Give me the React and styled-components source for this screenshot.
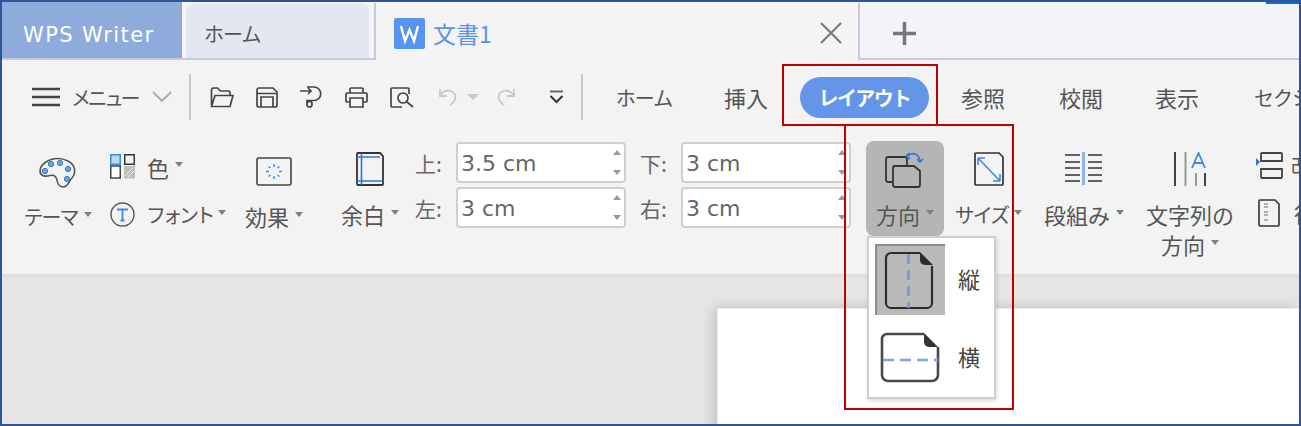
import styled, { createGlobalStyle } from 'styled-components';

const GlobalStyle = createGlobalStyle`
  html, body { margin: 0; padding: 0; background: #fff; }
  body { font-family: "Noto Sans CJK JP", "Noto Sans", sans-serif; color: #555; }
  svg { flex: none; display: block; }
`;

const Window = styled.div`
  position: relative;
  width: 1301px;
  height: 426px;
  box-sizing: border-box;
  border: 2px solid #2f5597;
  display: flex;
  flex-direction: column;
  overflow: hidden;
  background: #f3f4f8;
`;

const TitleBar = styled.div`
  display: flex;
  flex: none;
  height: 56px;
  border-bottom: 2px solid #c6cbda;
  background: #f3f4f8;
`;

const AppTab = styled.div`
  width: 180px;
  height: 56px;
  flex: none;
  background: #8fabdc;
  color: #fff;
  font: 21px/67px "DejaVu Sans", sans-serif;
  letter-spacing: 1.4px;
  padding-left: 21px;
  box-sizing: border-box;
`;

const HomeTab = styled.div`
  width: 183px;
  height: 54px;
  flex: none;
  margin: 2px 5px 0 4px;
  border-radius: 7px 7px 0 0;
  background: #e3e7f0;
  color: #555;
  font-size: 20px;
  letter-spacing: -1px;
  line-height: 60px;
  padding-left: 18px;
  box-sizing: border-box;
`;

const DocTab = styled.div`
  width: 486px;
  height: 57px;
  flex: none;
  margin-top: 1px;
  box-sizing: border-box;
  border-left: 2px solid #c6cbda;
  border-right: 2px solid #c6cbda;
  background: #f4f4f4;
  display: flex;
  align-items: center;
  padding: 3px 16px 0 18px;
  color: #5b92ea;
  font-size: 23px;
  gap: 8px;
`;

const DocName = styled.span`
  flex: 1;
`;

const AddTab = styled.div`
  margin-left: 33px;
  margin-top: 20px;
`;

const SyncMark = styled.div`
  position: absolute;
  top: 0;
  right: 0;
  width: 33px;
  height: 2px;
  background: #0b6fcd;
`;

const Ribbon = styled.div`
  flex: none;
  height: 214px;
  background: #f3f3f3;
`;

const TabRow = styled.div`
  display: flex;
  align-items: center;
  height: 74px;
  padding-left: 30px;
  white-space: nowrap;
`;

const MenuButton = styled.div`
  display: flex;
  align-items: center;
  flex: none;
  font-size: 20px;
  color: #555;
`;

const MenuText = styled.span`
  margin: 0 15px 0 11px;
  letter-spacing: -3.5px;
`;

const Separator = styled.div`
  width: 2px;
  height: 46px;
  flex: none;
  margin: 0 ${(p) => p.$right}px 0 ${(p) => p.$left}px;
  background: #c8c8c8;
`;

const QuickButton = styled.div`
  width: ${(p) => p.$w}px;
  margin-left: ${(p) => p.$ml || 0}px;
  flex: none;
  display: flex;
  justify-content: center;
  align-items: center;
`;

const RibbonTab = styled.div`
  width: ${(p) => p.$w}px;
  flex: none;
  text-align: center;
  font-size: ${(p) => p.$size || 22}px;
  letter-spacing: ${(p) => p.$track || 0}px;
  color: #555;
`;

const ActiveRibbonTab = styled.div`
  width: 129px;
  height: 41px;
  flex: none;
  margin-left: 13px;
  border-radius: 21px;
  background: #6495e8;
  color: #fff;
  font-size: 20px;
  font-weight: 700;
  letter-spacing: -1.6px;
  line-height: 41px;
  text-align: center;
`;

const ClippedTab = styled.div`
  flex: none;
  margin-left: 25px;
  font-size: 20px;
  letter-spacing: -1px;
  color: #555;
`;

const ToolRow = styled.div`
  display: flex;
  height: 140px;
  padding-top: 7px;
  box-sizing: border-box;
  white-space: nowrap;
`;

const Column = styled.div`
  position: relative;
  flex: none;
  width: ${(p) => p.$w}px;
  margin-left: ${(p) => p.$ml}px;
  display: flex;
  flex-direction: column;
  align-items: center;
`;

const IconSlot = styled.div`
  height: ${(p) => p.$h}px;
  flex: none;
  padding-top: ${(p) => p.$pad}px;
  box-sizing: border-box;
`;

const ToolLabel = styled.div`
  display: flex;
  align-items: center;
  height: 30px;
  font-size: ${(p) => p.$size || 22}px;
  letter-spacing: ${(p) => p.$track || 0}px;
  color: #555;
`;

const Caret = styled.span`
  width: 0;
  height: 0;
  flex: none;
  margin: 0 0 4px 6px;
  border-left: 4.5px solid transparent;
  border-right: 4.5px solid transparent;
  border-top: 5px solid #808080;
`;

const StackedTools = styled.div`
  flex: none;
  width: 118px;
  margin-left: 18px;
  padding-top: 13px;
  display: flex;
  flex-direction: column;
  gap: 23px;
`;

const StackedTool = styled.div`
  display: flex;
  align-items: center;
  height: 25px;
  gap: ${(p) => p.$gap}px;
`;

const MarginGrid = styled.div`
  flex: none;
  margin: 1px 0 0 15px;
  display: grid;
  grid-template-columns: 41px 170px 55px 170px;
  grid-auto-rows: 41px;
  row-gap: 4px;
  align-items: center;
`;

const MarginLabel = styled.div`
  font-size: 21px;
  color: #666;
  margin-left: ${(p) => (p.$second ? 14 : 0)}px;
`;

const SpinField = styled.div`
  height: 41px;
  box-sizing: border-box;
  border: 2px solid #cfcfcf;
  border-radius: 4px;
  background: #fff;
  display: flex;
  align-items: center;
  justify-content: space-between;
  padding: 2px 3px 0 3px;
  font: 22px "DejaVu Sans", sans-serif;
  color: #666;
`;

const Spinner = styled.div`
  display: flex;
  flex-direction: column;
  justify-content: space-between;
  height: 25px;
  margin-top: -2px;
`;

const SpinArrow = styled.span`
  width: 0;
  height: 0;
  border-left: 4.5px solid transparent;
  border-right: 4.5px solid transparent;
  ${(p) => (p.$down ? 'border-top: 5px solid #999;' : 'border-bottom: 5px solid #999;')}
`;

const ActiveTool = styled.div`
  width: 78px;
  height: 95px;
  border-radius: 8px;
  background: #b5b5b5;
  display: flex;
  flex-direction: column;
  align-items: center;
`;

const Dropdown = styled.div`
  position: absolute;
  top: 95px;
  left: 1px;
  width: 129px;
  height: 163px;
  box-sizing: border-box;
  border: 2px solid #cfcfcf;
  background: #fff;
  box-shadow: 1px 2px 4px rgba(0, 0, 0, 0.15);
  padding: 6px;
  display: flex;
  flex-direction: column;
  gap: 7px;
  z-index: 2;
`;

const DropdownItem = styled.div`
  display: flex;
  align-items: center;
  height: 71px;
  font-size: 22px;
  line-height: 1;
  color: #444;
`;

const ItemIcon = styled.div`
  width: 70px;
  height: 71px;
  flex: none;
  box-sizing: border-box;
  display: flex;
  align-items: center;
  padding-left: ${(p) => (p.$selected ? 7 : 5)}px;
  ${(p) =>
    p.$selected &&
    `background: #b9b9b9;
     border-top: 2px solid #8d8d8d;
     border-left: 2px solid #8d8d8d;`}
`;

const ItemText = styled.span`
  margin: 0 0 4px 13px;
`;

const RightTools = styled.div`
  flex: none;
  margin-left: 20px;
  padding-top: 9px;
  display: flex;
  flex-direction: column;
  gap: 19px;
`;

const RightTool = styled.div`
  display: flex;
  align-items: center;
  height: 29px;
  gap: ${(p) => p.$gap}px;
  padding-left: ${(p) => p.$pad}px;
  font-size: 21px;
  color: #555;
`;

const DocArea = styled.div`
  flex: 1;
  background: linear-gradient(#dcdcdc, #e6e6e6 6px);
  padding: 34px 0 0 715px;
  overflow: hidden;
`;

const DocPage = styled.div`
  height: 200px;
  background: #fff;
  box-shadow: -4px -1px 12px rgba(0, 0, 0, 0.16);
  border-top: 1px solid #eee;
  border-left: 1px solid #eee;
`;

const Annotation = styled.div`
  position: absolute;
  left: ${(p) => p.$x}px;
  top: ${(p) => p.$y}px;
  width: ${(p) => p.$w}px;
  height: ${(p) => p.$h}px;
  box-sizing: border-box;
  border: 2px solid #c00000;
  z-index: 3;
  pointer-events: none;
`;

const line = { fill: 'none', stroke: '#444', strokeWidth: 1.7 };
const blue = '#3f8ae0';

const WpsLogo = () => (
  <svg width="31" height="31" viewBox="0 0 31 31">
    <rect width="31" height="31" rx="2" fill="#5595ef" />
    <path d="M7 8 L11 23 L15.5 12 L20 23 L24 8" fill="none" stroke="#fff" strokeWidth="2.4" />
  </svg>
);
const CloseIcon = () => (
  <svg width="22" height="22" viewBox="0 0 22 22">
    <path d="M1 1 L21 21 M21 1 L1 21" stroke="#777" strokeWidth="2" />
  </svg>
);
const PlusIcon = () => (
  <svg width="23" height="23" viewBox="0 0 23 23">
    <path d="M0 11.5 H23 M11.5 0 V23" stroke="#777" strokeWidth="3.5" />
  </svg>
);
const HamburgerIcon = () => (
  <svg width="28" height="20" viewBox="0 0 28 20">
    <path d="M0 2 H28 M0 10 H28 M0 18 H28" stroke="#444" strokeWidth="2.4" />
  </svg>
);
const ChevronIcon = () => (
  <svg width="20" height="12" viewBox="0 0 20 12">
    <path d="M1 1 L10 10 L19 1" fill="none" stroke="#aaa" strokeWidth="1.8" />
  </svg>
);
const FolderIcon = () => (
  <svg width="24" height="21" viewBox="0 0 24 21">
    <path {...line} d="M1.5 18 V3 a2 2 0 0 1 2-2 h4 l3 3 h8 a1.5 1.5 0 0 1 1.5 1.5 V8 M1.5 19.5 L5 8.5 H23 L20 19.5 Z" />
  </svg>
);
const SaveIcon = () => (
  <svg width="22" height="21" viewBox="0 0 22 21">
    <path {...line} d="M1 3 a2 2 0 0 1 2-2 h14 l4 4 v13 a2 2 0 0 1 -2 2 H3 a2 2 0 0 1 -2-2 Z M1 6.5 H21 M5 20 V10 H17 V20" />
  </svg>
);
const SaveAsIcon = () => (
  <svg width="23" height="22" viewBox="0 0 23 22">
    <path {...line} d="M0 5 H11 M8 2 L11 5 L8 8 M7 1 H14 a6.5 6.5 0 0 1 0 13.5 H7 V18.5 a2.5 2.5 0 0 0 5 0 a2.5 2.5 0 0 0 -5 -1" />
  </svg>
);
const PrintIcon = () => (
  <svg width="23" height="21" viewBox="0 0 23 21">
    <path {...line} d="M5 6 V2 a1 1 0 0 1 1-1 h11 a1 1 0 0 1 1 1 v4 M5 15 H2 a1 1 0 0 1 -1-1 V7 a1 1 0 0 1 1-1 h19 a1 1 0 0 1 1 1 v7 a1 1 0 0 1 -1 1 h-3 M5 11 H18 V20 H5 Z" />
  </svg>
);
const PreviewIcon = () => (
  <svg width="24" height="21" viewBox="0 0 24 21">
    <path {...line} d="M12 20 H2 a1 1 0 0 1 -1-1 V2 a1 1 0 0 1 1-1 H18 a1 1 0 0 1 1 1 V7" />
    <circle {...line} cx="13" cy="11" r="5" />
    <path {...line} d="M17 15 L23 20" />
  </svg>
);
const UndoIcon = ({ flip }) => (
  <svg width="20" height="20" viewBox="0 0 20 20" style={flip ? { transform: 'scaleX(-1)' } : undefined}>
    <path d="M2 2 V9 H9 M2 9 C5 3 12 2 16 6 C19 10 17 15 12 18" fill="none" stroke="#c9c9c9" strokeWidth="1.8" />
  </svg>
);
const SmallCaret = () => (
  <svg width="12" height="6" viewBox="0 0 12 6">
    <path d="M0 0 H12 L6 6 Z" fill="#c9c9c9" />
  </svg>
);
const MoreIcon = () => (
  <svg width="15" height="14" viewBox="0 0 15 14">
    <path d="M1 1.5 H14" stroke="#666" strokeWidth="2" />
    <path d="M1.5 6 L7.5 12 L13.5 6" fill="none" stroke="#333" strokeWidth="2" />
  </svg>
);
const PaletteIcon = () => (
  <svg width="38" height="32" viewBox="0 0 38 32">
    <path
      d="M19 1.5 C9 1.5 1 8 1 14 C1 19 6 20 11 18.5 C15 17.5 17 19 18 23 C19 30 24 31 27 29 C30 27 30 24 33 21 C37 16 37 8 29 4 C26 2.5 23 1.5 19 1.5 Z"
      fill="none"
      stroke="#555"
      strokeWidth="1.6"
    />
    {[[6, 14], [12, 7], [21, 6], [29, 12], [28, 22]].map(([cx, cy]) => (
      <circle key={cx} cx={cx} cy={cy} r="2.6" fill="#6aa6e8" stroke="#2d74c8" strokeWidth="1" />
    ))}
  </svg>
);
const ColorGridIcon = () => (
  <svg width="25" height="25" viewBox="0 0 25 25">
    <rect x="0.75" y="0.75" width="9.5" height="9.5" fill="#bcd8f3" stroke={blue} strokeWidth="1.5" />
    <rect x="14.75" y="0.75" width="9.5" height="9.5" fill="#f3f3f3" stroke="#333" strokeWidth="1.5" />
    <rect x="0.75" y="12" width="9.5" height="12" fill="#fff" stroke="#444" strokeWidth="1.5" />
    <rect x="14" y="12" width="11" height="12.5" fill="#bdbdbd" />
    <path d="M15 22 L23 14 M18 23 L24 17" stroke="#eee" strokeWidth="1" />
  </svg>
);
const FontIcon = () => (
  <svg width="25" height="25" viewBox="0 0 25 25">
    <circle cx="12.5" cy="12.5" r="11.5" fill="none" stroke="#555" strokeWidth="1.4" />
    <path d="M7 7.5 H18 M12.5 7.5 V18.5 M10.5 18.5 H14.5" fill="none" stroke={blue} strokeWidth="1.8" />
  </svg>
);
const EffectIcon = () => (
  <svg width="36" height="29" viewBox="0 0 36 29">
    <rect x="1" y="1" width="34" height="27" rx="2" fill="none" stroke="#444" strokeWidth="1.6" />
    <path
      d="M18 7 V10 M18 19 V22 M10 14.5 H13 M23 14.5 H26 M12.5 9.5 L14.5 11 M23.5 9.5 L21.5 11 M12.5 19.5 L14.5 18 M23.5 19.5 L21.5 18"
      stroke={blue}
      strokeWidth="1.5"
    />
  </svg>
);
const MarginIcon = () => (
  <svg width="28" height="34" viewBox="0 0 28 34">
    <path d="M1 2 a1 1 0 0 1 1-1 H24 L27 4 V32 a1 1 0 0 1 -1 1 H2 a1 1 0 0 1 -1-1 Z" fill="none" stroke="#333" strokeWidth="1.8" />
    <path d="M5.5 1 V33 M1 29 H27 M1 5 H24" stroke="#2b78d4" strokeWidth="1.6" />
  </svg>
);
const OrientationIcon = () => (
  <svg width="40" height="38" viewBox="0 0 40 38">
    <path d="M7 30 H3 a2 2 0 0 1 -2-2 V7 a2 2 0 0 1 2-2 H20 a2 2 0 0 1 2 2 V14" fill="none" stroke="#333" strokeWidth="1.8" />
    <path d="M8 16 a2 2 0 0 1 2-2 H29 L35 19 V33 a2 2 0 0 1 -2 2 H10 a2 2 0 0 1 -2-2 Z" fill="none" stroke="#333" strokeWidth="1.8" />
    <path d="M23 4 C27 0 34 1 35 9 M21 4 L25 1 M21 4 L25 7 M32 7 L35 10 L38 7" fill="none" stroke="#2b78d4" strokeWidth="1.6" />
  </svg>
);
const SizeIcon = () => (
  <svg width="30" height="34" viewBox="0 0 30 34">
    <path d="M1 2 a1 1 0 0 1 1-1 H25 L29 5 V32 a1 1 0 0 1 -1 1 H2 a1 1 0 0 1 -1-1 Z" fill="none" stroke="#333" strokeWidth="1.7" />
    <path d="M4 6 L26 29 M4 6 V13 M4 6 H11 M26 29 V22 M26 29 H19" fill="none" stroke="#3f8ae0" strokeWidth="1.6" />
  </svg>
);
const ColumnsIcon = () => (
  <svg width="38" height="33" viewBox="0 0 38 33">
    <path d="M0 3 H15 M0 10 H15 M0 16 H15 M0 23 H15 M0 29 H15 M23 3 H37 M23 10 H37 M23 16 H37 M23 23 H37 M23 29 H37" stroke="#333" strokeWidth="1.6" />
    <path d="M18.5 0 V33" stroke="#8db5e4" strokeWidth="3" />
  </svg>
);
const TextDirectionIcon = () => (
  <svg width="34" height="34" viewBox="0 0 34 34">
    <path d="M2 0 V34" stroke="#444" strokeWidth="2" />
    <path d="M12.5 0 V34" stroke="#999" strokeWidth="2" />
    <path d="M23 21 V34" stroke="#999" strokeWidth="2" />
    <path d="M32 21 V34" stroke="#444" strokeWidth="2" />
    <path d="M19 16 L25.5 1 L32 16 M21 11 H30" fill="none" stroke="#3f8ae0" strokeWidth="1.8" />
  </svg>
);
const BreakIcon = () => (
  <svg width="28" height="28" viewBox="0 0 28 28">
    <path d="M1 7 L5 11 L1 15 Z" fill="#2b78d4" />
    <path d="M6 10 V3 a1 1 0 0 1 1-1 H26 a1 1 0 0 1 1 1 V10 Z M6 18 V26 a1 1 0 0 0 1 1 H26 a1 1 0 0 0 1-1 V18 Z" fill="none" stroke="#444" strokeWidth="1.8" />
  </svg>
);
const LineNumberIcon = () => (
  <svg width="22" height="28" viewBox="0 0 22 28">
    <path d="M1 2 a1 1 0 0 1 1-1 H17 L21 5 V26 a1 1 0 0 1 -1 1 H2 a1 1 0 0 1 -1-1 Z" fill="none" stroke="#333" strokeWidth="1.6" />
    <path d="M6 5 H10 M6 8 H10 M6 13 H10 M6 16 H10 M6 21 H10" stroke="#999" strokeWidth="1.6" />
  </svg>
);
const PortraitIcon = () => (
  <svg width="50" height="59" viewBox="0 0 50 59">
    <path d="M36 2 H7 a5 5 0 0 0 -5 5 V52 a5 5 0 0 0 5 5 H43 a5 5 0 0 0 5-5 V15" fill="none" stroke="#2c2c2c" strokeWidth="2.2" />
    <path d="M36 1 L49 14 H41 a5 5 0 0 1 -5-5 Z" fill="#2c2c2c" />
    <path d="M24.5 3 V57" stroke="#6f97d6" strokeWidth="2.4" strokeDasharray="10 6" />
  </svg>
);
const LandscapeIcon = () => (
  <svg width="60" height="51" viewBox="0 0 60 51">
    <path d="M44 2 H7 a5 5 0 0 0 -5 5 V43 a6 6 0 0 0 6 6 H52 a6 6 0 0 0 6-6 V15" fill="none" stroke="#4a4a4a" strokeWidth="2.6" />
    <path d="M44 1 L58 15 H49 a5 5 0 0 1 -5-5 Z" fill="#333" />
    <path d="M3 28 H58" stroke="#7ea6e4" strokeWidth="2.4" strokeDasharray="11 6" />
  </svg>
);

function SpinBox({ value }) {
  return (
    <SpinField>
      {value}
      <Spinner>
        <SpinArrow />
        <SpinArrow $down />
      </Spinner>
    </SpinField>
  );
}

export default function App() {
  return (
    <Window>
      <GlobalStyle />
      <SyncMark />
      <TitleBar>
        <AppTab>WPS Writer</AppTab>
        <HomeTab>ホーム</HomeTab>
        <DocTab>
          <WpsLogo />
          <DocName>文書1</DocName>
          <CloseIcon />
        </DocTab>
        <AddTab>
          <PlusIcon />
        </AddTab>
      </TitleBar>

      <Ribbon>
        <TabRow>
          <MenuButton>
            <HamburgerIcon />
            <MenuText>メニュー</MenuText>
            <ChevronIcon />
          </MenuButton>
          <Separator $left={17} $right={8} />
          <QuickButton $w={45}><FolderIcon /></QuickButton>
          <QuickButton $w={45}><SaveIcon /></QuickButton>
          <QuickButton $w={45}><SaveAsIcon /></QuickButton>
          <QuickButton $w={45}><PrintIcon /></QuickButton>
          <QuickButton $w={45}><PreviewIcon /></QuickButton>
          <QuickButton $w={38} $ml={5}><UndoIcon /></QuickButton>
          <QuickButton $w={12}><SmallCaret /></QuickButton>
          <QuickButton $w={54}><UndoIcon flip /></QuickButton>
          <QuickButton $w={46}><MoreIcon /></QuickButton>
          <Separator $left={2} $right={0} />
          <RibbonTab $w={122} $size={20} $track={-1}>ホーム</RibbonTab>
          <RibbonTab $w={82}>挿入</RibbonTab>
          <ActiveRibbonTab>レイアウト</ActiveRibbonTab>
          <RibbonTab $w={108}>参照</RibbonTab>
          <RibbonTab $w={88}>校閲</RibbonTab>
          <RibbonTab $w={104}>表示</RibbonTab>
          <ClippedTab>セクション</ClippedTab>
        </TabRow>

        <ToolRow>
          <Column $w={69} $ml={21}>
            <IconSlot $h={60} $pad={16}><PaletteIcon /></IconSlot>
            <ToolLabel $size={20} $track={-2}>テーマ<Caret /></ToolLabel>
          </Column>
          <StackedTools>
            <StackedTool $gap={12}>
              <ColorGridIcon />
              <ToolLabel>色<Caret /></ToolLabel>
            </StackedTool>
            <StackedTool $gap={11}>
              <FontIcon />
              <ToolLabel $size={20} $track={-3.5}>フォント<Caret /></ToolLabel>
            </StackedTool>
          </StackedTools>
          <Column $w={62} $ml={15}>
            <IconSlot $h={60} $pad={16}><EffectIcon /></IconSlot>
            <ToolLabel>効果<Caret /></ToolLabel>
          </Column>
          <Column $w={60} $ml={35}>
            <IconSlot $h={58} $pad={11}><MarginIcon /></IconSlot>
            <ToolLabel>余白<Caret /></ToolLabel>
          </Column>
          <MarginGrid>
            <MarginLabel>上:</MarginLabel>
            <SpinBox value="3.5 cm" />
            <MarginLabel $second>下:</MarginLabel>
            <SpinBox value="3 cm" />
            <MarginLabel>左:</MarginLabel>
            <SpinBox value="3 cm" />
            <MarginLabel $second>右:</MarginLabel>
            <SpinBox value="3 cm" />
          </MarginGrid>
          <Column $w={78} $ml={15}>
            <ActiveTool>
              <IconSlot $h={58} $pad={11}><OrientationIcon /></IconSlot>
              <ToolLabel>方向<Caret /></ToolLabel>
            </ActiveTool>
            <Dropdown>
              <DropdownItem>
                <ItemIcon $selected><PortraitIcon /></ItemIcon>
                <ItemText>縦</ItemText>
              </DropdownItem>
              <DropdownItem>
                <ItemIcon><LandscapeIcon /></ItemIcon>
                <ItemText>横</ItemText>
              </DropdownItem>
            </Dropdown>
          </Column>
          <Column $w={69} $ml={10}>
            <IconSlot $h={58} $pad={11}><SizeIcon /></IconSlot>
            <ToolLabel $size={20} $track={-2}>サイズ<Caret /></ToolLabel>
          </Column>
          <Column $w={82} $ml={20}>
            <IconSlot $h={58} $pad={11}><ColumnsIcon /></IconSlot>
            <ToolLabel>段組み<Caret /></ToolLabel>
          </Column>
          <Column $w={90} $ml={20}>
            <IconSlot $h={58} $pad={11}><TextDirectionIcon /></IconSlot>
            <ToolLabel>文字列の</ToolLabel>
            <ToolLabel>方向<Caret /></ToolLabel>
          </Column>
          <RightTools>
            <RightTool $gap={8} $pad={0}><BreakIcon />改ページ</RightTool>
            <RightTool $gap={14} $pad={3}><LineNumberIcon />行番号</RightTool>
          </RightTools>
        </ToolRow>
      </Ribbon>

      <DocArea>
        <DocPage />
      </DocArea>

      <Annotation $x={780} $y={62} $w={156} $h={62} />
      <Annotation $x={842} $y={122} $w={170} $h={286} />
    </Window>
  );
}
